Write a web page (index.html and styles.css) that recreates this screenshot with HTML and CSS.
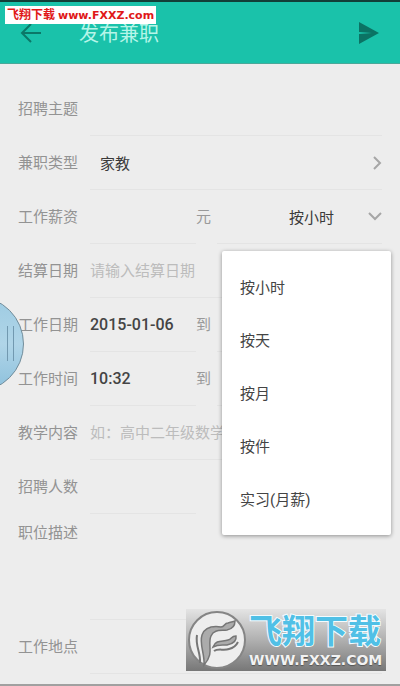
FILE: index.html
```html
<!DOCTYPE html>
<html lang="zh-CN">
<head>
	<meta charset="utf-8">
	<meta name="viewport" content="width=device-width, initial-scale=1">
	<link rel="stylesheet" href="styles.css">
	<title>发布兼职</title>
</head>
<body>
	<header class="topbar">
		<button class="icon-btn" aria-label="返回">
			<svg width="22" height="20" viewBox="0 0 22 20"><path d="M21 10H2M11 1L2 10l9 9" fill="none" stroke="#0b7868" stroke-width="2"/></svg>
		</button>
		<h1 class="title">发布兼职</h1>
		<button class="icon-btn" aria-label="发送">
			<svg width="20" height="22" viewBox="0 0 20 22"><path d="M0 0l20 11L0 22v-10l13-1L0 10z" fill="#0b7364"/></svg>
		</button>
	</header>

	<form class="form">
		<div class="row">
			<label class="label" for="subject">招聘主题</label>
			<input class="field" id="subject" type="text">
		</div>
		<div class="row">
			<label class="label" for="type">兼职类型</label>
			<button class="field picker" id="type" type="button">家教
				<svg width="9" height="14" viewBox="0 0 9 14"><path d="M1 1l6 6-6 6" fill="none" stroke="#a6a6a6" stroke-width="2"/></svg>
			</button>
		</div>
		<div class="row">
			<label class="label" for="pay">工作薪资</label>
			<input class="field half" id="pay" type="text">
			<span class="unit">元</span>
			<div class="pay-unit">
				<button class="field picker pay-picker" type="button" aria-haspopup="listbox" aria-expanded="true">按小时
					<svg width="14" height="9" viewBox="0 0 14 9"><path d="M1 1l6 6 6-6" fill="none" stroke="#a6a6a6" stroke-width="2"/></svg>
				</button>
				<div class="menu">
					<button class="option" type="button">按小时</button>
					<button class="option" type="button">按天</button>
					<button class="option" type="button">按月</button>
					<button class="option" type="button">按件</button>
					<button class="option" type="button">实习(月薪)</button>
				</div>
			</div>
		</div>
		<div class="row">
			<label class="label" for="settle">结算日期</label>
			<input class="field" id="settle" type="text" placeholder="请输入结算日期">
		</div>
		<div class="row">
			<label class="label" for="date-from">工作日期</label>
			<input class="field half" id="date-from" type="text" value="2015-01-06">
			<label class="unit" for="date-to">到</label>
			<input class="field" id="date-to" type="text">
		</div>
		<div class="row">
			<label class="label" for="time-from">工作时间</label>
			<input class="field half" id="time-from" type="text" value="10:32">
			<label class="unit" for="time-to">到</label>
			<input class="field" id="time-to" type="text">
		</div>
		<div class="row">
			<label class="label" for="content">教学内容</label>
			<input class="field" id="content" type="text" placeholder="如：高中二年级数学">
		</div>
		<div class="row">
			<label class="label" for="people">招聘人数</label>
			<input class="field half" id="people" type="text">
		</div>
		<div class="row row-tall">
			<label class="label" for="desc">职位描述</label>
			<textarea class="field" id="desc"></textarea>
		</div>
		<div class="row">
			<label class="label" for="place">工作地点</label>
			<input class="field" id="place" type="text">
		</div>
	</form>

	<div class="site-tag">飞翔下载 <span class="site-tag-url">www.FXXZ.com</span></div>

	<div class="handle"></div>

	<div class="brand">
		<svg class="brand-logo" width="60" height="60" viewBox="0 0 60 60">
			<circle cx="30" cy="30" r="28" fill="#eee" stroke="#858585" stroke-width="2"/>
			<path d="M17 55C18 44 12 34 15 25c3-8 12-9 19-8 4 0 3-4 7-4 3-1 5-1 7-2 0 5-3 8-8 9-6 1-13-1-16 6-4 9 4 17-7 29z" fill="#ababab" stroke="#767676" stroke-width="1.5"/>
			<path d="M13 53C14 43 8 36 10 25" fill="none" stroke="#767676" stroke-width="2"/>
			<path d="M26 37c3-8 10-5 15-7 4-1 3-4 8-4 1 6-4 8-9 9-5 0-9-1-14 2z" fill="#ababab" stroke="#767676" stroke-width="1.5"/>
			<path d="M27 41c4-3 10 0 15-2 4-1 7-3 9-7" fill="none" stroke="#767676" stroke-width="2"/>
		</svg>
		<div class="brand-text">
			<span class="brand-name">飞翔下载</span>
			<span class="brand-url">WWW.FXXZ.COM</span>
		</div>
	</div>
</body>
</html>
```
FILE: styles.css
```css
* {
	box-sizing: border-box
}

body {
	position: relative;
	min-height: 100vh;
	margin: 0;
	background-color: #ededed;
	border-bottom: 2px solid #a0a0a0;
	color: #444;
	font-family: Roboto, "Noto Sans CJK SC", sans-serif;
	font-size: 15px
}

button, input, textarea {
	margin: 0;
	padding: 0;
	border: 0;
	background: none;
	color: inherit;
	font: inherit;
	outline: none
}

button {
	cursor: pointer
}

svg {
	display: block
}

.topbar {
	display: flex;
	align-items: center;
	height: 64px;
	padding: 0 21px 0 20px;
	background-color: #1ac2aa;
	border-top: 2px solid #123f38;
	border-bottom: 1px solid #4aa899
}

.title {
	flex: 1;
	margin: 0 0 0 37px;
	color: #b5f5e8;
	font-size: 20px;
	font-weight: 400
}

/* form rows */
.form {
	padding: 18px 18px 9px
}

.row {
	display: flex;
	align-items: stretch;
	height: 54px
}

.label {
	flex: none;
	width: 72px;
	color: #939393;
	line-height: 54px
}

.field {
	flex: 1;
	min-width: 0;
	border-bottom: 1px solid #e4e4e4;
	font-size: 16px;
	font-weight: 500
}

.field::placeholder {
	color: #bcbcbc;
	font-family: "Noto Sans CJK TC", sans-serif;
	font-size: 15px;
	font-weight: 400;
	opacity: 1
}

.half {
	flex: none;
	width: 106px
}

.unit {
	flex: none;
	width: 21px;
	color: #999;
	line-height: 54px
}

.picker {
	display: flex;
	align-items: center;
	justify-content: space-between;
	padding-left: 10px;
	color: #3a3a3a;
	font-size: 15px;
	font-weight: 400
}

.pay-unit {
	position: relative;
	display: flex;
	flex: 1
}

.pay-picker {
	padding-left: 72px
}

.row-tall {
	height: 106px
}

.row-tall .label {
	line-height: 38px
}

.row-tall .field {
	padding-top: 8px;
	resize: none
}

/* opened list of pay units */
.menu {
	position: absolute;
	top: 61px;
	left: 5px;
	right: -9px;
	z-index: 1;
	padding: 9px 0 10px;
	background-color: #fff;
	border-radius: 2px;
	box-shadow: 0 1px 4px rgba(0, 0, 0, 0.4)
}

.option {
	display: block;
	width: 100%;
	height: 53px;
	padding-left: 18px;
	text-align: left
}

.site-tag {
	position: absolute;
	top: 6px;
	left: 5px;
	height: 18px;
	padding: 0 2px;
	background-color: #fff;
	color: #e01818;
	font-size: 12px;
	font-weight: 700;
	line-height: 18px;
	white-space: nowrap
}

.site-tag-url {
	font-family: "DejaVu Sans", sans-serif;
	font-size: 11px
}

/* side handle, half off the screen */
.handle {
	position: absolute;
	top: 301px;
	left: 0;
	width: 24px;
	height: 84px;
	overflow: hidden
}

.handle::before {
	content: "";
	position: absolute;
	top: -5px;
	right: 0;
	width: 94px;
	height: 94px;
	background: linear-gradient(#9dcbe2, #b0d5e8 50%, #8cc0dc);
	border: 1px solid #718c9a;
	border-radius: 50%
}

.handle::after {
	content: "";
	position: absolute;
	top: 25px;
	left: 7px;
	width: 5px;
	height: 35px;
	border: 1px solid #7299b0;
	border-width: 0 1px
}

.brand {
	position: absolute;
	right: 14px;
	bottom: 13px;
	z-index: 2;
	display: flex;
	align-items: center;
	width: 200px;
	height: 62px;
	padding-left: 1px;
	background: linear-gradient(#e4e4e4, #b0b0b0 50%, #777)
}

.brand-logo {
	flex: none
}

.brand-text {
	display: flex;
	flex-direction: column;
	margin-left: 2px
}

.brand-name {
	color: #50c0e6;
	font-size: 33px;
	font-weight: 700;
	line-height: 40px;
	-webkit-text-stroke: 2px #f4fcff;
	paint-order: stroke fill
}

.brand-url {
	color: #f2f2f2;
	font-family: "DejaVu Sans", sans-serif;
	font-size: 14px;
	font-weight: 700;
	line-height: 16px;
	text-shadow: 0 1px 1px #555
}
```
